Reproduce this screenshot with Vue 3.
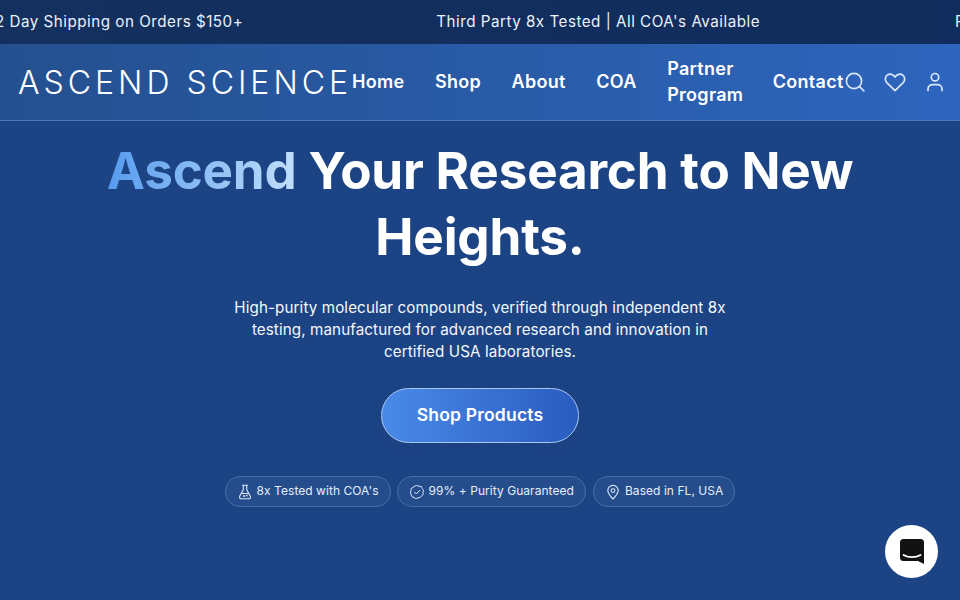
<script setup>
const announcements = ['2 Day Shipping on Orders $150+', "Third Party 8x Tested | All COA's Available", 'Premium']
const links = ['Home', 'Shop', 'About', 'COA', 'Partner Program', 'Contact']
</script>

<template>
  <div class="page">
    <div class="ticker">
      <div class="ticker-track">
        <span v-for="a in announcements" :key="a" class="ticker-item">{{ a }}</span>
      </div>
    </div>
    <header class="nav">
      <div class="logo">ASCEND SCIENCE</div>
      <nav class="links">
        <a v-for="l in links" :key="l" class="link" :class="{ wrap: l === 'Partner Program' }">{{ l }}</a>
      </nav>
      <div class="icons">
        <svg width="22" height="22" viewBox="0 0 22 22" fill="none" stroke="currentColor" stroke-width="1.6" stroke-linecap="round"><circle cx="10" cy="10" r="7.6"/><path d="M15.6 15.6 20 20"/></svg>
        <svg width="22" height="22" viewBox="0 0 22 22" fill="none" stroke="currentColor" stroke-width="1.7" stroke-linejoin="round"><path d="M11 19.600 2.800 11.600C.6 9.300 1 5.700 3.200 4.100 5.600 2.400 9 3.100 11 6c2-2.900 5.400-3.600 7.800-1.900 2.200 1.600 2.600 5.200.4 7.500z"/></svg>
        <svg width="22" height="22" viewBox="0 0 22 22" fill="none" stroke="currentColor" stroke-width="1.700" stroke-linecap="round"><circle cx="11" cy="6.200" r="3.700"/><path d="M4 19.500v-1.500c0-2.600 2-4.300 4.500-4.300h5c2.500 0 4.500 1.700 4.500 4.300v1.500"/></svg>
      </div>
    </header>
    <main class="hero">
      <h1 class="title"><span class="accent">Ascend</span> Your Research to New Heights.</h1>
      <p class="sub">High-purity molecular compounds, verified through independent 8x testing, manufactured for advanced research and innovation in certified USA laboratories.</p>
      <button class="cta">Shop Products</button>
      <div class="badges">
        <div class="badge">
          <svg width="16" height="16" viewBox="0 0 16 16" fill="none" stroke="currentColor" stroke-width="1.100" stroke-linejoin="round" stroke-linecap="round"><path d="M5.500 1.200h5M6.300 1.200v4.600L2.800 12c-.7 1.300 0 2.800 1.500 2.800h7.400c1.500 0 2.200-1.500 1.500-2.800L9.700 5.800V1.200M4.500 9.500h7"/><circle cx="7" cy="12" r=".5"/><circle cx="9.800" cy="11.600" r=".4"/></svg>
          <span>8x Tested with COA's</span>
        </div>
        <div class="badge">
          <svg width="16" height="16" viewBox="0 0 16 16" fill="none" stroke="currentColor" stroke-width="1" stroke-linejoin="round" stroke-linecap="round"><path d="M8 1.600 10 2.300 12.200 2.500 13.200 4.500 14.400 6.300 14 8.500 14.200 10.600 12.400 12 11 13.600 8.800 14 6.800 14.600 5 13.500 3 12.800 2.200 10.800 1.400 8.800 2 6.700 2.200 4.500 4 3.300 5.800 2.100z"/><path d="M5.500 8.200 7.300 10l3.400-3.600"/></svg>
          <span>99% + Purity Guaranteed</span>
        </div>
        <div class="badge">
          <svg width="16" height="16" viewBox="0 0 16 16" fill="none" stroke="currentColor" stroke-width="1.100" stroke-linejoin="round"><path d="M8 15C5.500 12.500 2.800 9.800 2.800 6.600a5.200 5.200 0 0 1 10.400 0C13.200 9.800 10.500 12.500 8 15z"/><circle cx="8" cy="6.600" r="1.900"/></svg>
          <span>Based in FL, USA</span>
        </div>
      </div>
    </main>
    <button class="chat" aria-label="Chat">
      <svg width="24" height="26" viewBox="0 0 24 26"><path fill="#121212" d="M3.500 0h17A3.500 3.500 0 0 1 24 3.500V25l-6-3H3.500A3.500 3.500 0 0 1 0 18.500v-15A3.500 3.500 0 0 1 3.500 0z"/><path d="M3.500 16c4.500 2.800 12.500 2.800 17 0" fill="none" stroke="#fff" stroke-width="1.800" stroke-linecap="round"/></svg>
    </button>
  </div>
</template>

<style>
html, body { margin: 0; background: #1c4484; }
</style>

<style scoped>
.page {
  position: relative;
  width: 960px;
  height: 600px;
  overflow: hidden;
  background: #1c4484;
  color: #fff;
  font-family: Inter, "Liberation Sans", sans-serif;
}
.ticker {
  height: 44px;
  box-sizing: border-box;
  padding-bottom: 2px;
  background: linear-gradient(90deg, #13305f, #102c5c);
  overflow: hidden;
  display: flex;
  align-items: center;
}
.ticker-track {
  display: flex;
  margin-left: -5px;
  font-size: 15.200px;
  letter-spacing: .5px;
  white-space: nowrap;
  color: #eaf1fb;
}
.ticker-item { flex: none; }
.ticker-item:nth-child(2) { margin-left: 193px; }
.ticker-item:nth-child(3) { margin-left: 195px; }
.nav {
  height: 76px;
  border-bottom: 1px solid #4a78bd;
  background: linear-gradient(90deg, #24508f, #2e65bd);
  display: flex;
  align-items: center;
  padding: 0 16px 0 18px;
}
.logo {
  font-size: 32px;
  font-weight: 300;
  letter-spacing: 4px;
  white-space: nowrap;
  flex: none;
}
.links {
  display: flex;
  align-items: center;
  gap: 30.500px;
  font-size: 18px;
  font-weight: 600;
  line-height: 26px;
  letter-spacing: .3px;
  flex: none;
}
.link { white-space: nowrap; }
.link.wrap { white-space: normal; width: 75px; }
.icons {
  display: flex;
  align-items: center;
  gap: 18px;
  color: #dbe8fb;
  flex: none;
}
.hero {
  display: flex;
  flex-direction: column;
  align-items: center;
  text-align: center;
}
.title {
  margin: 16px 0 0;
  width: 800px;
  font-size: 51.200px;
  line-height: 66px;
  font-weight: 700;
  letter-spacing: -.2px;
}
.accent {
  background: linear-gradient(90deg, #569bee, #c1dffb);
  -webkit-background-clip: text;
  background-clip: text;
  color: transparent;
}
.sub {
  margin: 28px 0 0;
  width: 520px;
  font-size: 15.200px;
  line-height: 22px;
  letter-spacing: .1px;
  color: #f4f7fc;
}
.cta {
  margin-top: 25px;
  width: 198px;
  height: 55px;
  padding: 0 0 2px;
  border-radius: 28px;
  border: 1px solid #a8c7f0;
  background: linear-gradient(90deg, #4a8ae8, #2a5cc0);
  color: #fff;
  font: 600 17.600px Inter, sans-serif;
  letter-spacing: .15px;
  box-shadow: 0 4px 24px rgba(30, 60, 130, .35);
}
.badges {
  display: flex;
  gap: 6px;
  margin-top: 33px;
}
.badge {
  display: flex;
  align-items: center;
  gap: 4px;
  height: 29px;
  padding: 0 11px;
  border: 1px solid #456fa9;
  border-radius: 15px;
  background: #254d8c;
  font-size: 12px;
  letter-spacing: .05px;
  color: #e6eefa;
}
.badge span { position: relative; top: -1px; }
.badge:last-child { margin-left: 1px; }
.badge svg { flex: none; color: #dbe8fb; }
.chat {
  position: absolute;
  right: 22px;
  bottom: 22px;
  width: 53px;
  height: 53px;
  border: 0;
  border-radius: 50%;
  background: #fff;
  display: flex;
  align-items: center;
  justify-content: center;
  padding: 0;
}
</style>
